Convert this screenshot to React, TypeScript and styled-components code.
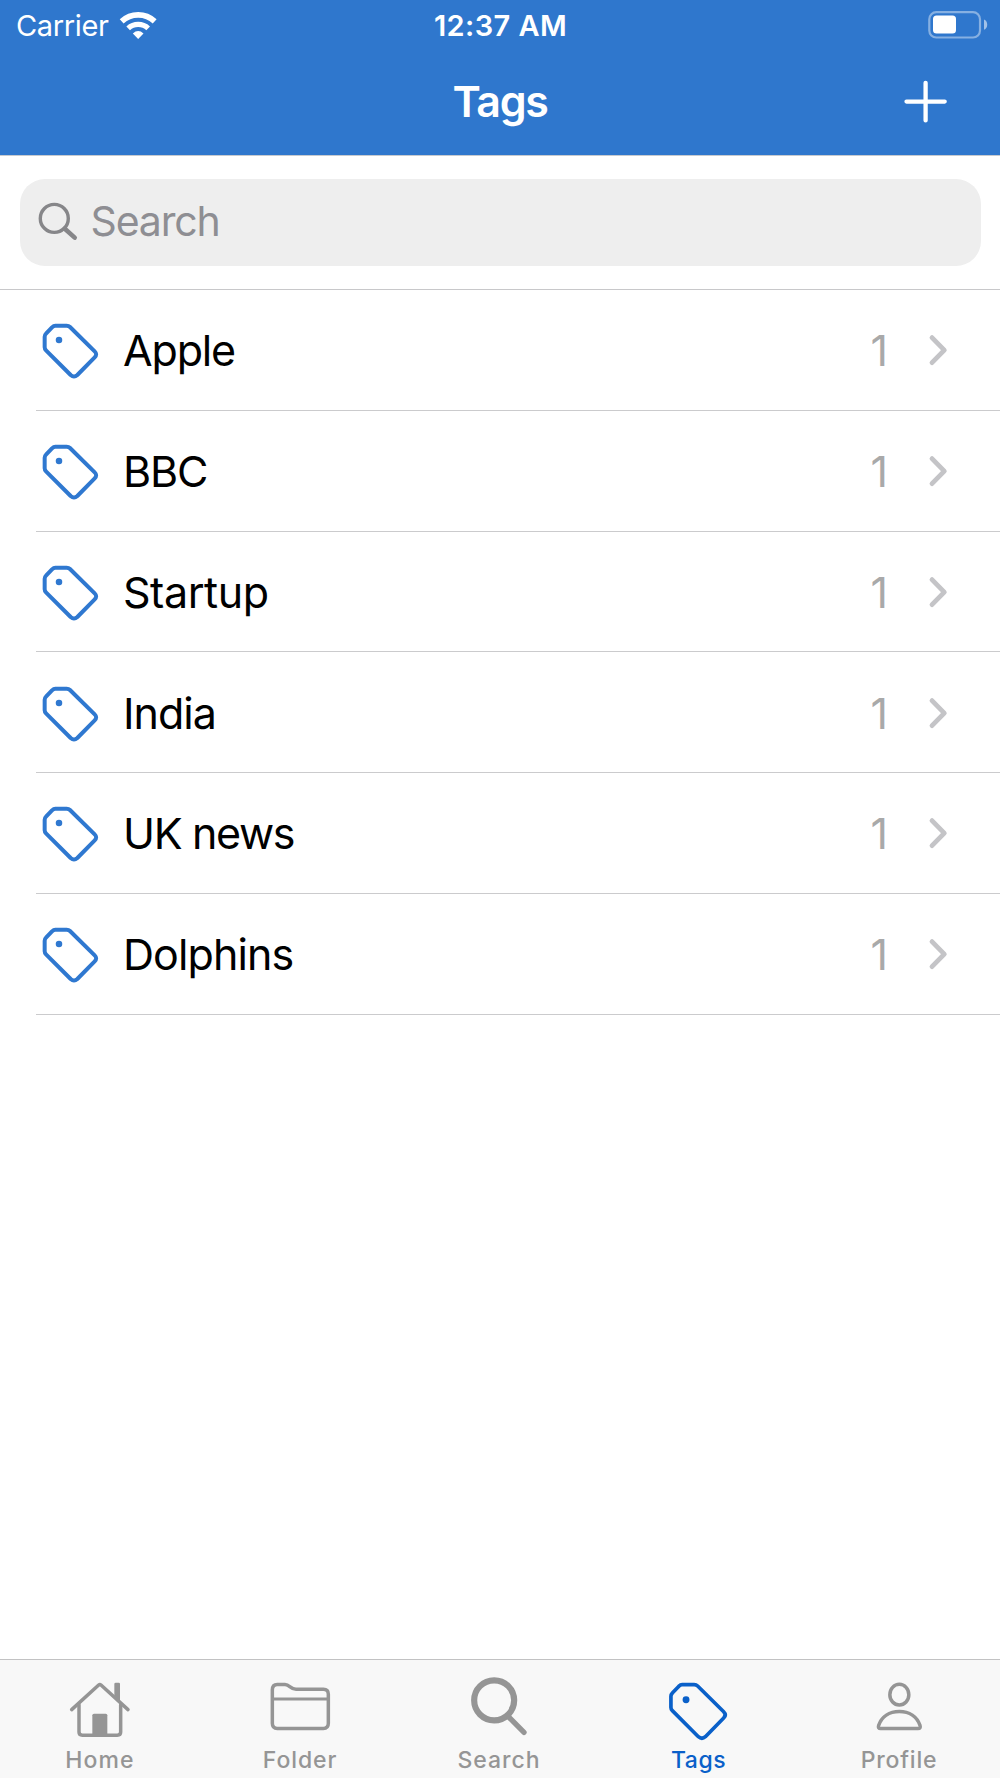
import React from 'react';
import styled, { createGlobalStyle } from 'styled-components';

const GlobalStyle = createGlobalStyle`
  *, *::before, *::after { box-sizing: border-box; }
  body { margin: 0; background: #fff; }
  svg { display: block; flex: none; }
`;

const Screen = styled.div`
  display: flex;
  flex-direction: column;
  width: 1000px;
  height: 1778px;
  background: #fff;
  font-family: Inter, 'Liberation Sans', sans-serif;
  overflow: hidden;
`;

const Header = styled.header`
  height: 156px;
  background: #2f77cd;
  border-bottom: 1px solid #c6cad0;
  color: #fff;
`;

const StatusBar = styled.div`
  display: grid;
  grid-template-columns: 1fr auto 1fr;
  align-items: center;
  height: 50px;
  padding: 0 12px 0 16px;
  font-size: 29px;
  line-height: 48px;
`;

const CarrierGroup = styled.div`
  display: flex;
  align-items: center;
  gap: 9.5px;
  letter-spacing: -0.35px;
`;

const Carrier = styled.span`
  padding-top: 2px;
`;

const Clock = styled.time`
  padding: 2px 3px 0 0;
  font-weight: 560;
  letter-spacing: 0.4px;
`;

const BatterySlot = styled.div`
  display: flex;
  justify-content: flex-end;
`;

const NavBar = styled.div`
  display: grid;
  grid-template-columns: 1fr auto 1fr;
  align-items: center;
  height: 101px;
`;

const Title = styled.h1`
  grid-column: 2;
  margin: 0;
  font-size: 43px;
  font-weight: 570;
  line-height: 60px;
  letter-spacing: -1.3px;
`;

const AddButton = styled.button`
  justify-self: end;
  margin: 3px 52px 0 0;
  padding: 0;
  border: 0;
  background: none;
  color: inherit;
`;

const SearchSection = styled.div`
  height: 134px;
  padding: 23px 19.5px 0 19.5px;
  border-bottom: 1px solid #c8c8ca;
`;

const SearchBox = styled.div`
  display: flex;
  align-items: center;
  gap: 11px;
  height: 87px;
  padding: 0 16px 3px;
  border-radius: 25px;
  background: #eee;
  color: #8e8e93;
  font-size: 41px;
  line-height: 60px;
  letter-spacing: -1.15px;
`;

const List = styled.ul`
  flex: 1;
  margin: 0;
  padding: 0 0 0 36px;
  list-style: none;
`;

const Row = styled.li`
  display: flex;
  align-items: center;
  height: 120.8px;
  padding: 0.8px 52px 0 3.6px;
  border-bottom: 1px solid #cbcbcd;
`;

const RowLabel = styled.span<{ $spacing: number }>`
  flex: 1;
  margin-left: 23.4px;
  color: #000;
  font-size: 43px;
  line-height: 60px;
  letter-spacing: ${(p) => p.$spacing}px;
`;

const Count = styled.span`
  margin-right: 40px;
  color: #a9a9a9;
  font-size: 43px;
  line-height: 60px;
`;

const TabBar = styled.nav`
  display: grid;
  grid-template-columns: repeat(5, 1fr);
  height: 119px;
  border-top: 1px solid #c2c2c3;
  background: #f8f8f8;
`;

const Tab = styled.a<{ $active?: boolean }>`
  display: flex;
  flex-direction: column;
  align-items: center;
  padding-top: 10px;
  color: ${(p) => (p.$active ? '#0a60c9' : '#959595')};
`;

const TabLabel = styled.span<{ $spacing: number; $nudge?: number }>`
  padding-right: ${(p) => p.$nudge ?? 0}px;
  font-size: 23px;
  font-weight: 500;
  line-height: 31px;
  letter-spacing: ${(p) => p.$spacing}px;
`;

const WifiIcon = () => (
  <svg width="40" height="31" viewBox="355 24 120 93" fill="none" stroke="#fff">
    <path d="M366 58 A72.5 72.5 0 0 1 465 58" strokeWidth="17" />
    <path d="M385.5 79 A44 44 0 0 1 445.5 79" strokeWidth="16" />
    <path d="M399.5 94.5 Q415.5 80 431.5 94.5 L415.5 111 Z" fill="#fff" stroke="none" />
  </svg>
);

const BatteryIcon = () => (
  <svg width="60" height="30" viewBox="928 9.5 60 30">
    <rect x="929.3" y="11.7" width="50.7" height="25.3" rx="7" fill="none" stroke="#fff" strokeOpacity=".42" strokeWidth="2.2" />
    <rect x="933" y="15" width="23" height="18" rx="3.5" fill="#fff" />
    <path d="M984 19 C988.3 20.5 988.3 27.8 984 29.3 Z" fill="#fff" fillOpacity=".55" />
  </svg>
);

const PlusIcon = () => (
  <svg width="46" height="46" viewBox="0 0 46 46" stroke="#fff" strokeWidth="4.3" strokeLinecap="round">
    <path d="M4.5 22.6 H42.7 M23.6 3.8 V41.4" />
  </svg>
);

const SearchIcon = () => (
  <svg width="44" height="44" viewBox="0 0 44 44" fill="none" stroke="#868689" strokeLinecap="round">
    <circle cx="18.3" cy="19.4" r="14" strokeWidth="3.4" />
    <path d="M28.8 29.8 L38.7 38.6" strokeWidth="4.6" />
  </svg>
);

const TAG_OUTLINE =
  'M46 17 H80 Q86 17 90 21 L164 94 Q173 103 164 112 L112 165 Q102 174 92 165 L18 91 Q14 87 14 82 V50 Q14 45 18 41 L36 22 Q41 17 46 17 Z';

const TagShape = ({ weight }: { weight: number }) => (
  <>
    <path d={TAG_OUTLINE} fill="none" stroke="currentColor" strokeWidth={weight} strokeLinejoin="round" />
    <circle cx="57" cy="60" r="9.8" fill="currentColor" stroke="none" />
  </>
);

const TagIcon = () => (
  <svg width="60" height="60" viewBox="0 0 180 180" color="#2f78d0">
    <TagShape weight={12} />
  </svg>
);

const ChevronIcon = () => (
  <svg width="20" height="32" viewBox="0 0 20 32" fill="none" stroke="#c4c4c7" strokeWidth="4.8" strokeLinecap="round" strokeLinejoin="round">
    <path d="M4 3.6 L16.3 16.1 L4 28.6" />
  </svg>
);

const TabIcon = ({ viewBox, children }: { viewBox: string; children: React.ReactNode }) => (
  <svg width="80" height="75" viewBox={viewBox} fill="none" stroke="currentColor" strokeWidth="10.5" strokeLinecap="round" strokeLinejoin="round">
    {children}
  </svg>
);

const HomeGlyph = () => (
  <TabIcon viewBox="180 90 240 225">
    <path d="M215 209 L296 135 Q299.5 132 303 135 L384 209" />
    <path d="M237 194 V276 Q237 285.5 247 285.5 H352 Q362 285.5 362 276 V194" />
    <path d="M343 167 V132 Q343 128 347 128 H356 Q360 128 360 132 V184 Z" fill="currentColor" stroke="none" />
    <path d="M277 288 V226 Q277 221 282 221 H317 Q322 221 322 226 V288 Z" fill="currentColor" stroke="none" />
  </TabIcon>
);

const FolderGlyph = () => (
  <TabIcon viewBox="780 90 240 225">
    <path d="M817 150 Q817 133.5 832 133.5 H855 C869 133.5 872 148 888 148 H970 Q985 148 985 163 V250 Q985 265.5 970 265.5 H832 Q817 265.5 817 250 Z" />
    <path d="M817 177 H985" strokeWidth="8.5" />
  </TabIcon>
);

const SearchGlyph = () => (
  <TabIcon viewBox="60 90 240 225">
    <circle cx="162.5" cy="181" r="60" strokeWidth="18.5" />
    <path d="M206 231 L252 277" strokeWidth="16" />
  </TabIcon>
);

const TagsGlyph = () => (
  <TabIcon viewBox="0 0 240 225">
    <g transform="translate(18 26) scale(1.055)">
      <TagShape weight={10.5} />
    </g>
  </TabIcon>
);

const ProfileGlyph = () => (
  <TabIcon viewBox="180 90 240 225">
    <ellipse cx="298" cy="164" rx="28.5" ry="31" />
    <path d="M242 265.5 H354 Q363 265.5 360 256 C351 230 328 214.5 298 214.5 C268 214.5 245 230 236 256 Q233 265.5 242 265.5 Z" />
  </TabIcon>
);

const tags = [
  { name: 'Apple', count: 1, spacing: -1.15 },
  { name: 'BBC', count: 1, spacing: -1.1 },
  { name: 'Startup', count: 1, spacing: -0.45 },
  { name: 'India', count: 1, spacing: -1 },
  { name: 'UK news', count: 1, spacing: -1.35 },
  { name: 'Dolphins', count: 1, spacing: -0.9 },
];

const tabs = [
  { label: 'Home', Glyph: HomeGlyph, spacing: 1.1, nudge: 0 },
  { label: 'Folder', Glyph: FolderGlyph, spacing: 0.9, nudge: 0 },
  { label: 'Search', Glyph: SearchGlyph, spacing: 0.95, nudge: 2 },
  { label: 'Tags', Glyph: TagsGlyph, spacing: 0.5, nudge: 3 },
  { label: 'Profile', Glyph: ProfileGlyph, spacing: 0.8, nudge: 2 },
];

export default function App() {
  return (
    <>
      <GlobalStyle />
      <Screen>
        <Header>
          <StatusBar>
            <CarrierGroup>
              <Carrier>Carrier</Carrier>
              <WifiIcon />
            </CarrierGroup>
            <Clock>12:37 AM</Clock>
            <BatterySlot>
              <BatteryIcon />
            </BatterySlot>
          </StatusBar>
          <NavBar>
            <Title>Tags</Title>
            <AddButton aria-label="Add tag">
              <PlusIcon />
            </AddButton>
          </NavBar>
        </Header>
        <SearchSection>
          <SearchBox>
            <SearchIcon />
            <span>Search</span>
          </SearchBox>
        </SearchSection>
        <List>
          {tags.map((tag) => (
            <Row key={tag.name}>
              <TagIcon />
              <RowLabel $spacing={tag.spacing}>{tag.name}</RowLabel>
              <Count>{tag.count}</Count>
              <ChevronIcon />
            </Row>
          ))}
        </List>
        <TabBar>
          {tabs.map(({ label, Glyph, spacing, nudge }) => (
            <Tab key={label} $active={label === 'Tags'}>
              <Glyph />
              <TabLabel $spacing={spacing} $nudge={nudge}>
                {label}
              </TabLabel>
            </Tab>
          ))}
        </TabBar>
      </Screen>
    </>
  );
}
